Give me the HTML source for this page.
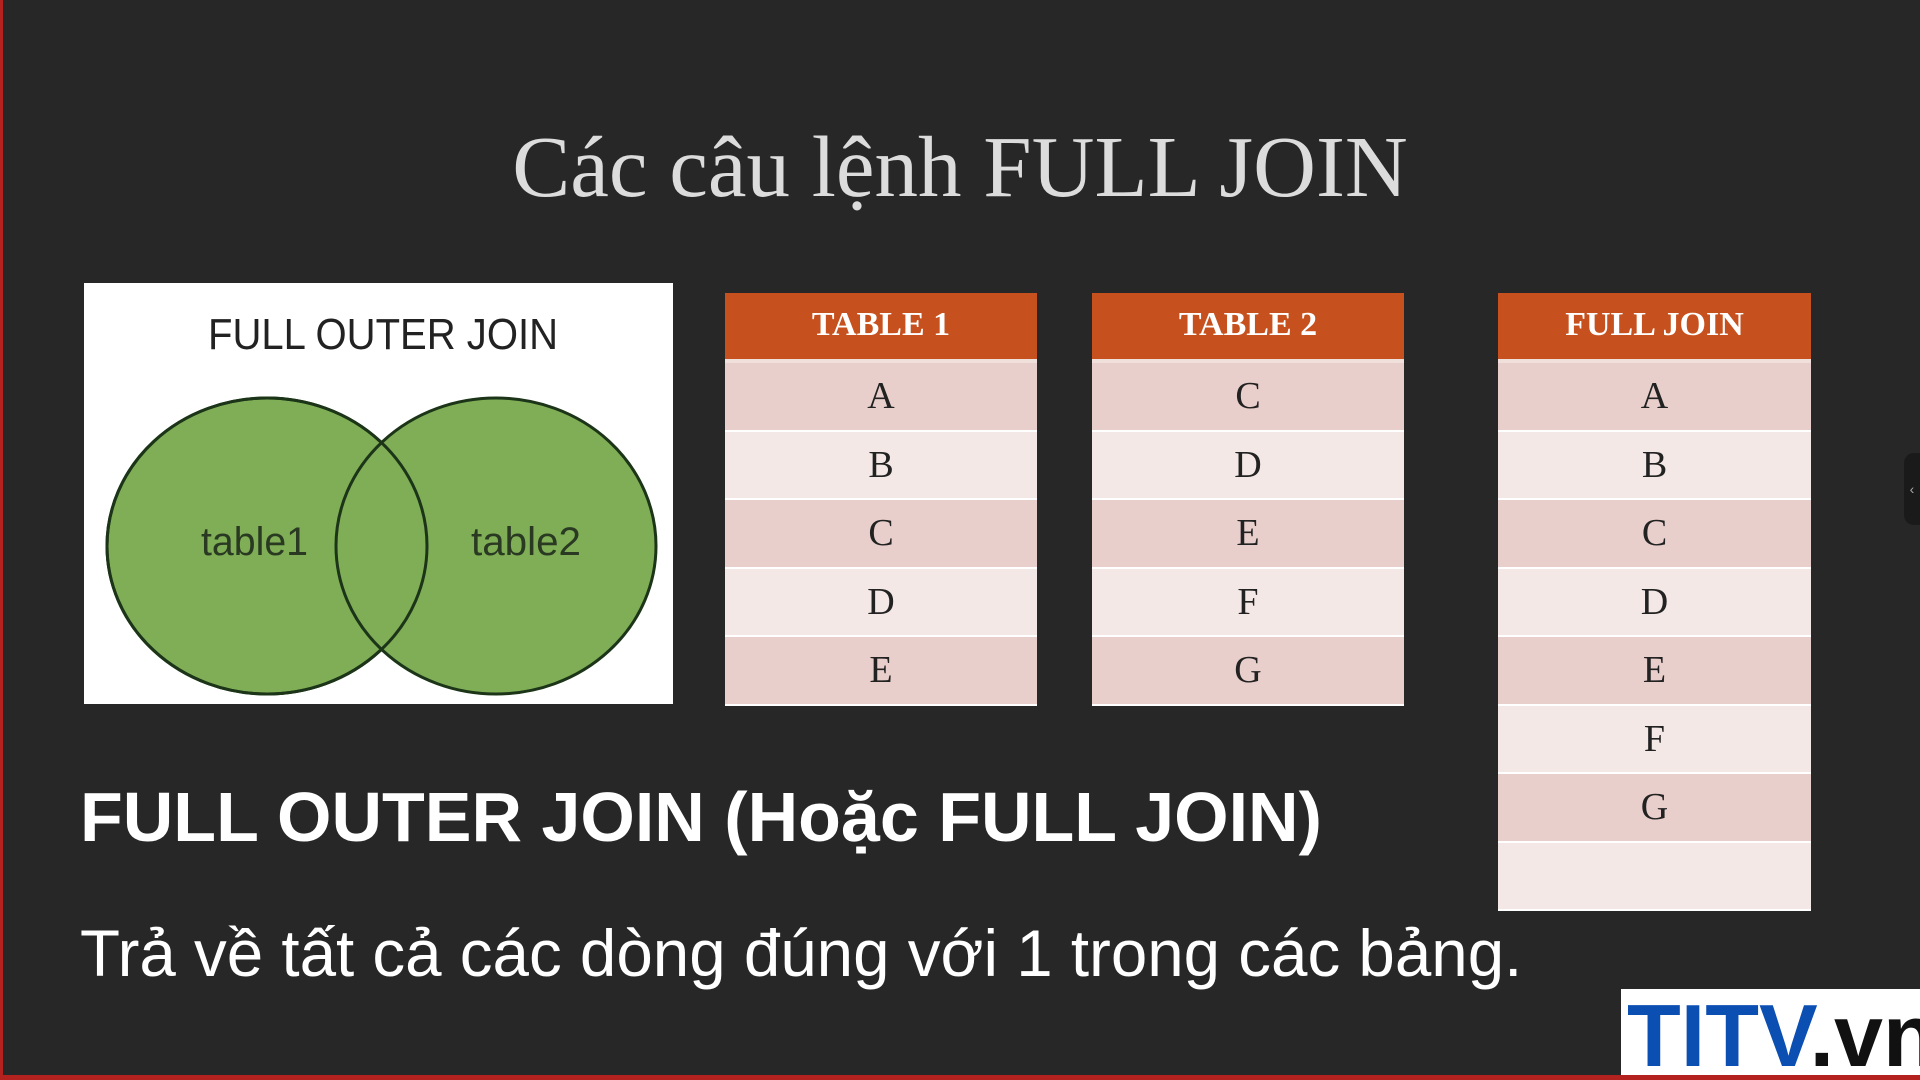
<!DOCTYPE html>
<html><head><meta charset="utf-8"><style>
*{margin:0;padding:0;box-sizing:border-box}
body{width:1920px;height:1080px;overflow:hidden;background:#272727;position:relative;font-family:"Liberation Sans",sans-serif}
.frame{position:absolute;left:0;top:0;width:1920px;height:1080px;border-left:3px solid #b3221e;border-bottom:5px solid #b3221e}
.title{position:absolute;left:0;width:1920px;text-align:center;top:116px;font-family:"Liberation Serif",serif;font-size:87px;color:#dcdcdc;white-space:nowrap}
.venn{position:absolute;left:84px;top:283px;width:589px;height:421px;background:#fff}
.tbl{position:absolute;top:293px;width:312px}
.hd{height:70px;background:#c7511e;color:#fff;font-family:"Liberation Serif",serif;font-weight:bold;font-size:34px;text-align:center;line-height:64px;border-bottom:4px solid #f0e0dc}
.r{height:68.5px;border-bottom:2px solid #fff;font-family:"Liberation Serif",serif;font-size:38px;color:#222;text-align:center;line-height:66px}
.d{background:#e8cfcb}.l{background:#f3e8e5}
.h1{position:absolute;left:80px;top:777px;font-weight:bold;font-size:70px;color:#fff;white-space:nowrap}
.p{position:absolute;left:80px;top:916px;font-size:65.5px;color:#fff;white-space:nowrap}
.logo{position:absolute;left:1621px;top:989px;width:299px;height:91px;background:#fff;font-weight:bold;font-size:88px;line-height:94px;padding-left:6px;white-space:nowrap;overflow:hidden}
.tab{position:absolute;right:0;top:453px;width:16px;height:72px;background:#1a1a1a;border-radius:10px 0 0 10px;color:#aaa;font-size:14px;line-height:72px;text-align:center}
</style></head><body>
<div class="title">Các câu lệnh FULL JOIN</div>
<div class="venn"><svg width="589" height="421" viewBox="0 0 589 421">
<text x="124" y="66" textLength="350" lengthAdjust="spacingAndGlyphs" font-family="Liberation Sans, sans-serif" font-size="44" fill="#222">FULL OUTER JOIN</text>
<ellipse cx="183" cy="263" rx="160" ry="148" fill="#7fae56" stroke="#1c3518" stroke-width="3"/>
<ellipse cx="412" cy="263" rx="160" ry="148" fill="#7fae56" stroke="#1c3518" stroke-width="3"/>
<ellipse cx="183" cy="263" rx="160" ry="148" fill="none" stroke="#1c3518" stroke-width="3"/>
<text x="117" y="272" textLength="107" lengthAdjust="spacingAndGlyphs" font-family="Liberation Sans, sans-serif" font-size="40" fill="#2a3a22">table1</text>
<text x="387" y="272" textLength="110" lengthAdjust="spacingAndGlyphs" font-family="Liberation Sans, sans-serif" font-size="40" fill="#2a3a22">table2</text>
</svg></div>
<div class="tbl" style="left:725px"><div class="hd">TABLE 1</div>
<div class="r d">A</div><div class="r l">B</div><div class="r d">C</div><div class="r l">D</div><div class="r d">E</div></div>
<div class="tbl" style="left:1092px"><div class="hd">TABLE 2</div>
<div class="r d">C</div><div class="r l">D</div><div class="r d">E</div><div class="r l">F</div><div class="r d">G</div></div>
<div class="tbl" style="left:1498px;width:313px"><div class="hd">FULL JOIN</div>
<div class="r d">A</div><div class="r l">B</div><div class="r d">C</div><div class="r l">D</div><div class="r d">E</div><div class="r l">F</div><div class="r d">G</div><div class="r l"></div></div>
<div class="h1">FULL OUTER JOIN (Hoặc FULL JOIN)</div>
<div class="p">Trả về tất cả các dòng đúng với 1 trong các bảng.</div>
<div class="logo"><span style="color:#0b4fb3">TITV</span><span style="color:#111">.vn</span></div>
<div class="tab">&lsaquo;</div>
<div class="frame"></div>
</body></html>
